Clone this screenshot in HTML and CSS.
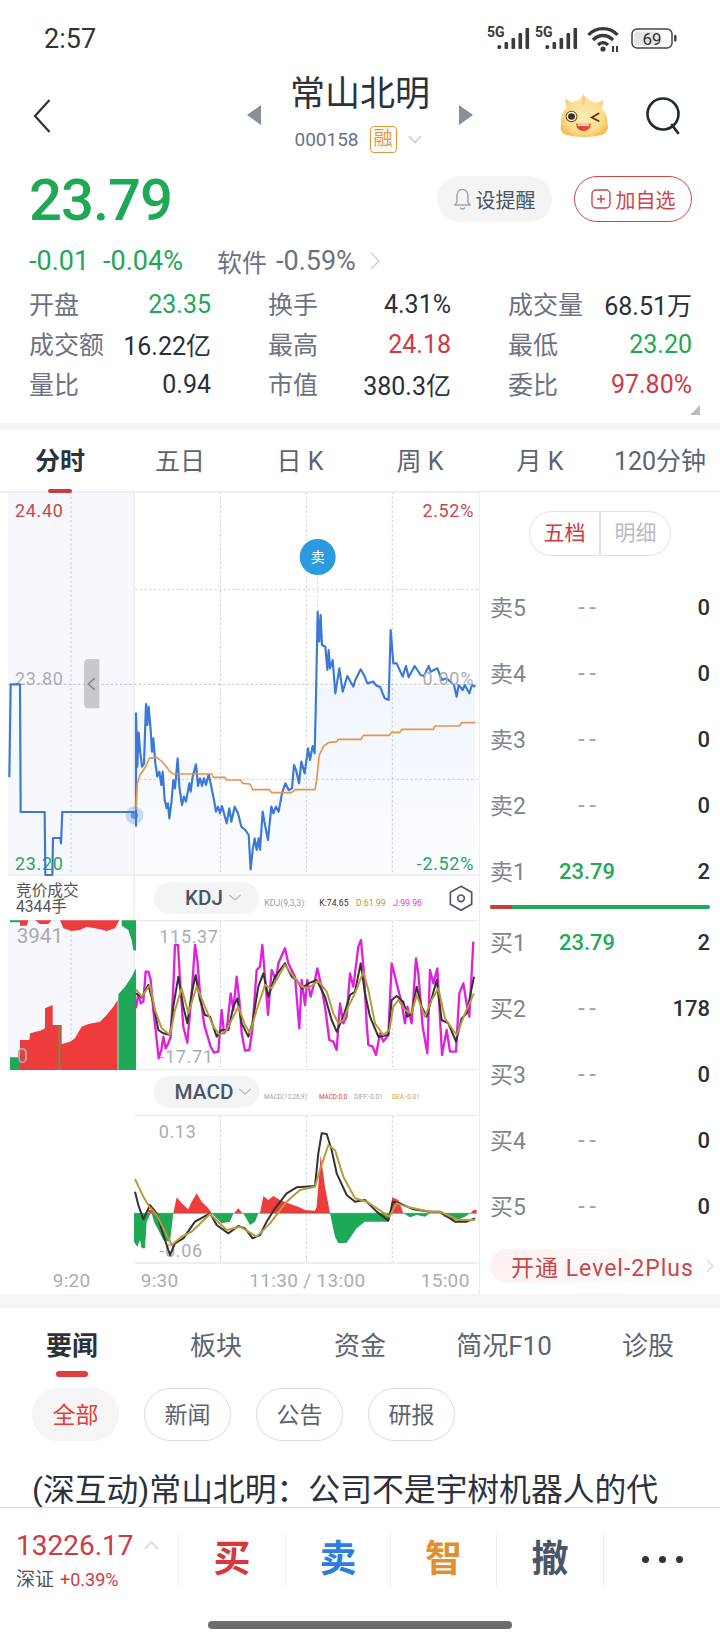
FILE: index.html
```html
<!DOCTYPE html>
<html lang="zh-CN">
<head>
  <meta charset="UTF-8" />
  <meta name="viewport" content="width=device-width, initial-scale=1.0" />
  <title>常山北明</title>
  <link rel="stylesheet" href="styles.css">
</head>
<body>
<div class="page">

  <!-- status bar -->
  <div class="status">
    <span class="clock">2:57</span>
    <svg class="status-icons" width="190" height="32" viewBox="0 -4 190 32">
      <text class="net" x="0" y="11">5G</text>
      <g fill="#3a3a3a">
        <rect x="10.500" y="19" width="3.600" height="4" rx="1.500"/><rect x="17.500" y="16" width="3.600" height="7" rx="1"/><rect x="24.500" y="12" width="3.600" height="11" rx="1"/><rect x="31.500" y="7" width="3.600" height="16" rx="1"/><rect x="38.500" y="2" width="3.600" height="21" rx="1"/>
      </g>
      <text class="net" x="48" y="11">5G</text>
      <g fill="#3a3a3a">
        <rect x="58.500" y="19" width="3.600" height="4" rx="1.500"/><rect x="65.500" y="16" width="3.600" height="7" rx="1"/><rect x="72.500" y="12" width="3.600" height="11" rx="1"/><rect x="79.500" y="7" width="3.600" height="16" rx="1"/><rect x="86.500" y="2" width="3.600" height="21" rx="1"/>
      </g>
      <g fill="none" stroke="#3a3a3a" stroke-width="3.400">
        <path d="M101.500 9C109 0.500 123 0.500 130.500 9"/>
        <path d="M106 14C112 8 120 8 126 14"/>
        <path d="M111 19C114 16 118 16 121 19"/>
      </g>
      <circle cx="116" cy="23" r="2.600" fill="#3a3a3a"/>
      <path d="M126 20v6M130 20v6" stroke="#3a3a3a" stroke-width="2"/>
      <rect x="145" y="3" width="40" height="19" rx="5" fill="#fff" stroke="#444" stroke-width="1.500"/>
      <rect x="147.500" y="5.500" width="25" height="14" rx="3" fill="#e4e4e4"/>
      <rect x="187" y="9" width="2.500" height="6.500" rx="1" fill="#444"/>
      <text class="batt" x="165" y="18.500" text-anchor="middle">69</text>
    </svg>
  </div>

  <!-- stock header -->
  <header class="head">
    <div class="head-left">
      <svg width="18" height="34" viewBox="0 0 18 34"><path d="M16.500 1L2 17l14.500 16" fill="none" stroke="#2b323c" stroke-width="2.200"/></svg>
    </div>
    <div class="head-mid">
      <svg width="14" height="20" viewBox="0 0 14 20"><path d="M14 0v20L0 10z" fill="#8a9097"/></svg>
      <div class="title-box">
        <div class="title">常山北明</div>
        <div class="code-row">
          <span class="code">000158</span>
          <span class="rong">融</span>
          <svg width="14" height="9" viewBox="0 0 14 9"><path d="M1 1l6 6.500L13 1" fill="none" stroke="#c4c7cc" stroke-width="1.300"/></svg>
        </div>
      </div>
      <svg width="14" height="20" viewBox="0 0 14 20"><path d="M0 0v20l14-10z" fill="#8a9097"/></svg>
    </div>
    <div class="head-right">
      <svg width="50" height="44" viewBox="0 0 48 44" preserveAspectRatio="none">
        <defs>
          <radialGradient id="gold" cx="0.5" cy="0.5" r="0.6">
            <stop offset="0" stop-color="#fdeab4"/>
            <stop offset="0.65" stop-color="#fbdd8e"/>
            <stop offset="1" stop-color="#f2b944"/>
          </radialGradient>
        </defs>
        <path d="M23.500 0C25 3 26 5 29 6L36 9 42.500 6.500 41.500 15C45 19 47 24 46.500 30 48 34 46 38 43 40 36 44 12 44 5 40 2 38 1 34 2 30 1.500 24 3 18 7 14L6 5 12.500 8.500 19 6C21 5 22 3 23.500 0z" fill="url(#gold)"/>
        <path d="M23.500 3v8" stroke="#f4cf78" stroke-width="2"/>
        <circle cx="12" cy="22.500" r="5.200" fill="#fff" stroke="#6b4a22" stroke-width="1"/>
        <circle cx="12" cy="22.500" r="3.300" fill="#4a2c12"/>
        <path d="M38 19.500l-6.500 4 6.500 3.500" fill="none" stroke="#5b3413" stroke-width="1.800" stroke-linecap="round"/>
        <path d="M16.500 29.500c4 1 10 1 14 0 0 5-3.500 7.500-7 7.500s-7-2.500-7-7.500z" fill="#e8452f"/>
        <path d="M18 30.500h11v1.500H18z" fill="#fff"/>
      </svg>
      <svg width="38" height="38" viewBox="0 0 38 38"><circle cx="18" cy="17" r="15.500" fill="none" stroke="#1f2a33" stroke-width="2.600"/><path d="M27 28l6 8" stroke="#1f2a33" stroke-width="2.800" stroke-linecap="round"/></svg>
    </div>
  </header>

  <!-- price block -->
  <section class="quote">
    <div class="price-row">
      <span class="price">23.79</span>
      <div class="actions">
        <div class="btn-remind">
          <svg width="17" height="24" viewBox="0 0 17 24"><path d="M8.500 2.500C4.500 2.500 3 6 3 9v6l-2 3h15l-2-3V9c0-3-1.500-6.500-5.500-6.500zM6 20.500c1 2 4 2 5 0" fill="none" stroke="#a0a4aa" stroke-width="1.500"/></svg>
          <span>设提醒</span>
        </div>
        <div class="btn-add">
          <svg width="20" height="22" viewBox="0 0 20 22"><rect x="1" y="2" width="18" height="18" rx="4" fill="none" stroke="#c9474a" stroke-width="1.400"/><path d="M10 7v8M6 11h8" stroke="#c9474a" stroke-width="1.400"/></svg>
          <span>加自选</span>
        </div>
      </div>
    </div>
    <div class="change-row">
      <span class="green">-0.01</span>
      <span class="green pct">-0.04%</span>
      <span class="sector">软件</span>
      <span class="sector-val">-0.59%</span>
      <svg width="10" height="18" viewBox="0 0 10 18"><path d="M1 1l8 8-8 8" fill="none" stroke="#c8cbd0" stroke-width="1.300"/></svg>
    </div>
    <div class="stats">
      <div class="stat"><span>开盘</span><b class="green">23.35</b></div>
      <div class="stat"><span>换手</span><b>4.31%</b></div>
      <div class="stat"><span>成交量</span><b>68.51万</b></div>
      <div class="stat"><span>成交额</span><b>16.22亿</b></div>
      <div class="stat"><span>最高</span><b class="red">24.18</b></div>
      <div class="stat"><span>最低</span><b class="green">23.20</b></div>
      <div class="stat"><span>量比</span><b>0.94</b></div>
      <div class="stat"><span>市值</span><b>380.3亿</b></div>
      <div class="stat"><span>委比</span><b class="red">97.80%</b></div>
    </div>
    <svg class="corner" width="10" height="10" viewBox="0 0 10 10"><path d="M10 0v10H0z" fill="#b9bdc3"/></svg>
  </section>

  <div class="band"></div>

  <nav class="period-tabs">
    <a class="active">分时</a>
    <a>五日</a>
    <a>日 K</a>
    <a>周 K</a>
    <a>月 K</a>
    <a class="tab-wide">120分钟</a>
  </nav>

  <section class="market">
    <!-- chart drawn in 3x units, so one unit is a third of a pixel -->
    <svg class="chart" width="480" height="802" viewBox="0 0 1440 2406">
      <defs>
        <linearGradient id="area" x1="0" y1="0" x2="0" y2="1">
          <stop offset="0" stop-color="#f1f6fe"/>
          <stop offset="1" stop-color="#fbfcff"/>
        </linearGradient>
      </defs>

      <!-- price panel -->
      <g transform="translate(0,-186)">
        <rect x="24" y="186" width="378" height="1149" fill="#f7f8fd"/>
        <path class="area" d="M408 1335V850L440 830 470 1030 510 1165 533 985 590 1003 626 1033 660 1150 736 1200 752 1318 790 1145 810 1140 856 1060 904 995 944 970 948 770H1426V1335z"/>
        <path class="grid" d="M213 186V1335M661 186V1335M919 186V1335M1177 186V1335M405 478H1440M405 1048H1440"/>
        <path class="grid strong" d="M24 763H1440"/>
        <path class="rule" d="M402 186V1345M24 1335H1440M0 186H1440"/>
        <text class="lab lab-red" x="45" y="260">24.40</text>
        <text class="lab lab-red end" x="1422" y="260">2.52%</text>
        <text class="lab lab-green" x="45" y="1320">23.20</text>
        <text class="lab lab-green end" x="1422" y="1320">-2.52%</text>
        <text class="lab lab-grey" x="45" y="765">23.80</text>
        <polyline class="blue" points="28,1042 32,763 60,763 62,1146 134,1146 136,1335 157,1335 159,1224 181,1224 183,1240 187,1146 404,1146"/>
        <polyline class="blue" points="408,1190 408,850 412,1010 416,908 420,960 426,1010 432,1000 438,822 442,885 446,830 452,900 456,965 460,925 466,1000 472,1040 478,1025 484,1065 488,1025 494,1110 500,1135 504,1120 508,1165 514,1120 520,1050 525,1075 533,985 538,1070 546,1125 552,1100 558,1115 568,1060 572,1085 578,1040 588,1003 594,1068 600,1045 606,1068 612,1045 618,1065 626,1033 634,1070 642,1110 648,1145 654,1130 660,1150 666,1128 672,1150 680,1180 688,1135 694,1175 704,1130 714,1150 724,1190 736,1200 746,1215 752,1318 758,1260 764,1225 770,1260 776,1225 780,1260 788,1145 794,1180 804,1230 814,1130 820,1150 828,1130 836,1145 846,1090 856,1060 866,1080 876,1075 882,1005 888,1020 897,1060 904,995 914,1030 924,955 930,990 938,948 944,970 948,800 953,545 958,635 962,555 966,645 976,650 982,720 986,660 990,715 998,690 1006,790 1018,715 1028,785 1042,738 1060,770 1066,750 1082,718 1092,735 1102,760 1120,755 1130,768 1140,770 1154,805 1166,810 1172,600 1180,700 1190,700 1208,740 1218,708 1226,742 1244,708 1262,735 1272,738 1286,708 1292,725 1312,715 1326,750 1340,745 1362,765 1370,800 1376,765 1388,780 1394,765 1408,790 1416,765 1426,770"/>
        <polyline class="avg" points="408,1140 412,1060 420,1035 434,1015 448,985 470,982 490,998 510,1025 520,1032 635,1032 640,1042 675,1042 680,1050 722,1050 728,1060 750,1062 758,1079 808,1079 815,1088 875,1088 885,1079 945,1079 950,1050 958,975 970,950 985,938 1010,935 1015,928 1083,928 1090,916 1168,916 1175,907 1200,907 1205,898 1300,898 1305,888 1378,888 1385,878 1426,878"/>
        <text class="lab lab-grey end" x="1422" y="765">0.00%</text>
        <circle cx="403" cy="1156" r="27" fill="#3b78d8" opacity="0.25"/>
        <circle cx="403" cy="1156" r="11" fill="#3b78d8" opacity="0.7"/>
        <path d="M298 687H266Q252 687 252 701V821Q252 835 266 835H298z" fill="#c9c9cd"/>
        <path d="M284 745L265 762 284 779" fill="none" stroke="#7f8388" stroke-width="4"/>
        <path class="grid" stroke="#6fb3c9" d="M953 440V545"/>
        <circle cx="953" cy="381" r="54" fill="#2d9ae0"/>
        <text class="sell-mark" x="953" y="396">卖</text>
      </g>

      <!-- KDJ and MACD panels, auction volume -->
      <g transform="translate(0,1104)">
        <text class="auction" x="48" y="107">竞价成交</text>
        <text class="auction" x="48" y="155">4344手</text>
        <path class="rule" d="M402 45V180"/>

        <rect x="462" y="67" width="316" height="95" rx="47" fill="#f3f4f6"/>
        <text class="pill-name" x="612" y="136">KDJ</text>
        <path class="pill-chev" d="M688 105l17 15 17-15"/>
        <text class="legend" y="137"><tspan x="793" fill="#9a9ea5">KDJ(9,3,3):</tspan><tspan x="958" fill="#333">K:74.65</tspan><tspan x="1068" fill="#b8943c">D:61.99</tspan><tspan x="1180" fill="#d838d8">J:99.96</tspan></text>
        <path d="M1383 79l32 18v36l-32 18-32-18V97z" fill="none" stroke="#4b5563" stroke-width="5"/>
        <circle cx="1383" cy="115" r="10" fill="none" stroke="#4b5563" stroke-width="5"/>

        <rect x="24" y="182" width="378" height="446" fill="#f7f8fd"/>
        <path class="grid" d="M213 182V628M661 182V628M919 182V628M1177 182V628M661 768V1208M919 768V1208M1177 768V1208"/>
        <path class="rule" d="M402 182H1435M24 182H402M402 182V630M24 629H1435M402 766H1435M402 1209H1435"/>

        <path class="hist-red" d="M60,181 358,181 345,205 320,213 300,208 260,200 240,210 215,213 190,205 180,181 155,181 145,192 120,192 105,181 85,181 80,197 60,197z"/>
        <path class="hist-green" d="M30,181 60,181 60,187 30,187z M365,181 408,181 408,272 400,270 395,240 385,210 365,197z"/>
        <path class="hist-green" d="M30,630 30,592 60,592 60,630z M355,630 355,403 375,380 395,350 408,325 408,630z"/>
        <path class="hist-red" d="M60,540 88,540 90,520 120,512 135,505 135,445 158,435 158,495 185,495 185,552 210,545 225,535 245,500 265,492 300,485 320,465 340,440 353,420 353,630 60,630z"/>
        <path d="M178 497V630" stroke="#7a8a40" stroke-width="6"/>
        <text class="lab-vol" x="50" y="250">3941</text>
        <text class="lab-vol" x="50" y="610">0</text>

        <text class="lab lab-grey" x="478" y="250">115.37</text>
        <text class="lab lab-grey" x="478" y="610">-17.71</text>
        <polyline class="j-line" points="408,445 415,400 422,430 430,425 437,335 445,335 452,360 460,450 468,520 476,595 484,570 490,530 497,565 505,550 512,530 520,380 525,255 534,255 540,360 550,500 562,548 575,400 585,255 592,300 600,400 612,490 620,520 632,560 642,578 655,575 665,450 672,520 680,510 692,400 700,450 710,350 718,420 725,520 735,572 748,570 757,510 770,330 780,320 787,255 795,350 804,465 815,330 828,360 835,310 855,265 865,310 885,350 898,505 905,360 915,435 922,360 932,410 945,360 952,325 962,370 975,440 988,540 1000,545 1010,570 1020,430 1030,490 1040,470 1050,340 1060,380 1075,260 1083,240 1092,340 1100,490 1105,555 1118,560 1128,585 1140,520 1150,545 1165,525 1175,310 1190,370 1205,430 1215,490 1222,440 1235,490 1248,295 1255,340 1268,500 1282,580 1290,330 1300,370 1312,325 1326,585 1340,510 1350,575 1368,575 1378,400 1390,370 1398,420 1408,470 1420,245"/>
        <polyline class="k-line" points="408,400 425,412 445,375 460,430 475,510 490,520 510,525 520,440 535,350 550,440 562,490 575,400 587,345 600,420 615,465 630,470 650,530 665,510 685,510 700,440 712,415 725,490 745,530 757,490 775,380 790,340 805,410 825,350 855,310 875,350 890,360 905,385 925,370 950,360 975,410 995,480 1010,515 1030,470 1050,405 1065,395 1082,310 1095,400 1110,470 1135,530 1165,525 1175,420 1190,408 1210,425 1222,470 1235,460 1250,380 1265,440 1280,470 1310,360 1325,480 1345,490 1368,545 1385,475 1400,460 1422,350"/>
        <polyline class="d-line" points="408,388 425,410 450,375 465,450 485,505 510,525 525,450 545,385 565,460 590,380 615,440 640,500 660,525 680,510 700,470 715,440 735,495 750,520 770,450 795,375 815,385 855,315 885,355 905,380 925,385 955,362 980,395 1000,460 1015,490 1030,480 1045,440 1065,400 1090,335 1105,390 1125,490 1150,525 1168,510 1180,440 1195,420 1215,450 1235,460 1250,405 1275,470 1295,420 1315,385 1335,475 1370,525 1395,460 1422,400"/>

        <rect x="462" y="648" width="316" height="95" rx="47" fill="#f3f4f6"/>
        <text class="pill-name" x="612" y="717">MACD</text>
        <path class="pill-chev" d="M718 687l17 15 17-15"/>
        <text class="legend small" y="718"><tspan x="792" fill="#9a9ea5">MACD(12,26,9):</tspan><tspan x="957" fill="#d8383a">MACD:0.0</tspan><tspan x="1062" fill="#9a9ea5">DIFF:-0.01</tspan><tspan x="1176" fill="#c7a33f">DEA:-0.01</tspan></text>

        <text class="lab lab-grey" x="476" y="833">0.13</text>
        <path class="hist-red" d="M445 1060V1050H465V1060z M520,1060 530,1012 545,1030 565,1048 575,1025 590,1000 605,1025 625,1045 635,1060z M703,1060 715,1045 727,1060z M780,1060 790,1008 805,1020 820,1008 840,1020 870,1032 895,1040 915,1050 945,1052 950,1040 962,885 975,980 990,1060z M1170,1060 1177,1012 1195,1020 1210,1060z M1412,1060 1420,1050 1430,1050 1430,1060z"/>
        <path class="hist-green" d="M402,1060 402,1145 412,1160 420,1140 425,1165 435,1165 440,1085 452,1060z M455,1060 462,1085 475,1110 490,1140 510,1145 520,1060z M635,1060 665,1090 690,1085 700,1060z M730,1060 750,1095 765,1085 775,1060z M990,1060 1005,1130 1015,1150 1040,1148 1070,1105 1095,1085 1165,1085 1170,1060z M1210,1060 1230,1072 1250,1065 1275,1070 1290,1060z M1320,1060 1335,1072 1370,1080 1395,1070 1410,1060z"/>
        <path d="M402 1060H1430" stroke="#1fa855" stroke-width="2"/>
        <text class="lab lab-grey" x="478" y="1192">-0.06</text>
        <polyline class="k-line" points="405,995 415,1035 430,1078 450,1035 470,1060 490,1125 510,1185 525,1150 550,1135 585,1085 630,1060 650,1095 685,1120 715,1098 735,1105 758,1135 780,1125 800,1085 825,1045 860,1000 890,982 945,978 955,880 965,820 980,822 995,870 1010,940 1040,1005 1065,1025 1095,1020 1130,1055 1165,1082 1178,1025 1200,1030 1240,1048 1290,1055 1320,1055 1365,1085 1400,1085 1425,1075"/>
        <polyline class="d-line" points="405,957 430,1010 448,1040 470,1065 515,1155 545,1130 575,1115 630,1062 680,1110 720,1100 770,1130 810,1090 860,1025 900,990 945,980 960,930 985,855 1005,870 1030,950 1065,1015 1100,1025 1168,1070 1190,1030 1220,1040 1290,1055 1320,1055 1375,1080 1425,1080"/>

        <text class="axis" x="158" y="1280">9:20</text>
        <text class="axis" x="422" y="1280">9:30</text>
        <text class="axis" x="748" y="1280">11:30 / 13:00</text>
        <text class="axis" x="1262" y="1280">15:00</text>
      </g>
    </svg>

    <aside class="book">
      <div class="book-switch">
        <span class="on">五档</span>
        <span>明细</span>
      </div>
      <div class="book-rows">
        <div class="row"><span>卖5</span><em>--</em><b>0</b></div>
        <div class="row"><span>卖4</span><em>--</em><b>0</b></div>
        <div class="row"><span>卖3</span><em>--</em><b>0</b></div>
        <div class="row"><span>卖2</span><em>--</em><b>0</b></div>
        <div class="row"><span>卖1</span><em class="green">23.79</em><b>2</b></div>
      </div>
      <div class="ratio"><i></i></div>
      <div class="book-rows">
        <div class="row"><span>买1</span><em class="green">23.79</em><b>2</b></div>
        <div class="row"><span>买2</span><em>--</em><b>178</b></div>
        <div class="row"><span>买3</span><em>--</em><b>0</b></div>
        <div class="row"><span>买4</span><em>--</em><b>0</b></div>
        <div class="row"><span>买5</span><em>--</em><b>0</b></div>
      </div>
      <div class="level2">
        <span>开通 Level-2Plus</span>
        <svg width="8" height="14" viewBox="0 0 8 14"><path d="M1 1l6 6-6 6" fill="none" stroke="#d5d7db" stroke-width="1.200"/></svg>
      </div>
    </aside>
  </section>

  <div class="band band-news"></div>

  <nav class="news-tabs">
    <a class="active">要闻</a>
    <a>板块</a>
    <a>资金</a>
    <a>简况F10</a>
    <a>诊股</a>
  </nav>

  <div class="chips">
    <span class="chip on">全部</span>
    <span class="chip">新闻</span>
    <span class="chip">公告</span>
    <span class="chip">研报</span>
  </div>

  <p class="headline">(深互动)常山北明：公司不是宇树机器人的代</p>

  <!-- bottom bar sits over the news list -->
  <footer class="bar">
    <div class="index">
      <div class="index-top">
        <span class="index-val">13226.17</span>
        <svg width="15" height="9" viewBox="0 0 15 9"><path d="M1 8l6.500-7L14 8" fill="none" stroke="#cfd2d6" stroke-width="1.300"/></svg>
      </div>
      <div class="index-sub"><span>深证</span><b>+0.39%</b></div>
    </div>
    <a class="act buy">买</a>
    <a class="act sell">卖</a>
    <a class="act smart">智</a>
    <a class="act undo">撤</a>
    <a class="act more"><i></i><i></i><i></i></a>
    <div class="home-pill"></div>
  </footer>
</div>
</body>
</html>
```

FILE: styles.css
```css
* {
  box-sizing: border-box;
}

body {
  margin: 0;
  background: #fff;
  font-family: Roboto, "Noto Sans CJK SC", sans-serif;
  color: #2a2f38;
}

.page {
  position: relative;
  width: 720px;
  height: 1640px;
  overflow: hidden;
  background: #fff;
}

.green { color: #1fa855; }
.red { color: #d0393f; }

/* status bar */
.status {
  height: 70px;
  display: flex;
  align-items: center;
  justify-content: space-between;
  padding: 8px 43px 0 44px;
}

.status-icons {
  margin-top: -2px;
}

.clock {
  font-size: 27px;
  color: #333;
}

.net {
  font: 700 14px Roboto, sans-serif;
  fill: #3a3a3a;
}

.batt {
  font: 17px Roboto, sans-serif;
  fill: #333;
}

/* header */
.head {
  height: 90px;
  display: grid;
  grid-template-columns: 247px 226px 247px;
}

.head-left {
  display: flex;
  align-items: center;
  padding: 0 0 4px 33px;
}

.head-mid {
  display: flex;
  align-items: center;
  justify-content: space-between;
  padding-bottom: 6px;
}

.title-box {
  align-self: flex-start;
  padding-top: 2px;
  text-align: center;
}

.title {
  height: 46px;
  line-height: 46px;
  font-size: 35px;
  color: #2b323c;
}

.code-row {
  height: 42px;
  display: flex;
  align-items: center;
  justify-content: center;
  gap: 11px;
  padding-right: 4px;
}

.code {
  font-size: 19px;
  color: #6c7280;
}

.rong {
  width: 27px;
  height: 27px;
  line-height: 24px;
  text-align: center;
  font-size: 19px;
  color: #e8943a;
  border: 1px solid #e8943a;
  border-radius: 4px;
}

.head-right {
  display: flex;
  align-items: center;
  justify-content: flex-end;
  gap: 36px;
  padding: 0 37px 4px 0;
}

/* quote */
.quote {
  position: relative;
  height: 263px;
}

.price-row {
  height: 80px;
  display: flex;
  align-items: center;
  justify-content: space-between;
  padding: 0 28px 0 29px;
}

.price {
  font-size: 58px;
  font-weight: 500;
  letter-spacing: -1px;
  color: #1fa855;
}

.actions {
  display: flex;
  gap: 22px;
  margin-top: -2px;
}

.btn-remind,
.btn-add {
  height: 46px;
  display: flex;
  align-items: center;
  justify-content: center;
  gap: 5px;
  font-size: 20px;
  border-radius: 23px;
}

.btn-remind {
  width: 115px;
  background: #f4f4f5;
  color: #4b5563;
}

.btn-add {
  width: 118px;
  color: #c9474a;
  border: 1px solid #c9474a;
}

.change-row {
  height: 42px;
  display: flex;
  align-items: center;
  padding-left: 29px;
  margin-bottom: 2px;
  font-size: 27px;
  color: #6c7280;
}

.pct {
  margin-left: 14px;
}

.sector {
  margin-left: 34px;
  font-size: 25px;
}

.sector-val {
  margin-left: 9px;
  margin-right: 14px;
}

.stats {
  display: grid;
  grid-template-columns: 182px 183px 184px;
  column-gap: 57px;
  padding-left: 29px;
}

.stat {
  height: 40px;
  display: flex;
  align-items: center;
  justify-content: space-between;
  font-size: 25px;
  color: #6c7280;
  white-space: nowrap;
}

.stat span {
  margin-top: -3px;
}

.stat b {
  font-size: 25px;
  font-weight: 400;
  color: #2a2f38;
}

.stat b.green { color: #1fa855; }
.stat b.red { color: #d0393f; }

.corner {
  position: absolute;
  left: 690px;
  top: 245px;
}

.band {
  height: 7px;
  background: #f5f5f5;
}

.band-news {
  height: 14px;
}

/* period tabs */
.period-tabs {
  height: 62px;
  display: grid;
  grid-template-columns: repeat(6, 120px);
  border-bottom: 1px solid #eceef1;
}

.period-tabs a,
.news-tabs a {
  position: relative;
  text-align: center;
  color: #5c6470;
  white-space: nowrap;
}

.period-tabs a {
  font-size: 25px;
  line-height: 64px;
}

.period-tabs a.active,
.news-tabs a.active {
  font-weight: 700;
  color: #2a323c;
}

.period-tabs a.active::after {
  content: "";
  position: absolute;
  left: 48px;
  bottom: 1px;
  width: 24px;
  height: 4px;
  border-radius: 2px;
  background: #d0393f;
}

/* chart */
.market {
  height: 802px;
  display: flex;
}

.chart {
  flex: none;
  display: block;
  width: 480px;
}

.grid {
  fill: none;
  stroke: #bcc6ce;
  stroke-width: 2.500;
  stroke-dasharray: 7 7;
}

.grid.strong {
  stroke: #aab3bb;
}

.rule {
  fill: none;
  stroke: #e8eaee;
  stroke-width: 4;
}

.area {
  fill: url(#area);
}

.lab {
  font-family: Roboto, sans-serif;
  font-size: 54px;
  letter-spacing: 2px;
}

.lab.end {
  text-anchor: end;
}

.lab-red { fill: #c9474a; }
.lab-green { fill: #2aa55c; }
.lab-grey { fill: #a9adb3; }

.lab-vol {
  font-family: Roboto, sans-serif;
  font-size: 62px;
  fill: #a8a8ad;
}

.blue,
.avg,
.k-line,
.d-line,
.j-line {
  fill: none;
  stroke-linejoin: round;
}

.blue {
  stroke: #3b78d8;
  stroke-width: 6.500;
}

.avg {
  stroke: #e8944a;
  stroke-width: 5;
}

.sell-mark {
  font-size: 42px;
  fill: #fff;
  text-anchor: middle;
}

.auction {
  font-size: 47px;
  fill: #555;
}

.pill-name {
  font-family: Roboto, sans-serif;
  font-size: 62px;
  font-weight: 500;
  fill: #4b5563;
  text-anchor: middle;
}

.pill-chev {
  fill: none;
  stroke: #b5b9bf;
  stroke-width: 3.500;
}

.legend {
  font-family: Roboto, sans-serif;
  font-size: 26px;
}

.legend.small {
  font-size: 19px;
}

.hist-red { fill: #ee3b3b; }
.hist-green { fill: #1fa855; }

.j-line {
  stroke: #e020e0;
  stroke-width: 7;
}

.k-line {
  stroke: #333;
  stroke-width: 6;
}

.d-line {
  stroke: #b99a3d;
  stroke-width: 6;
}

.axis {
  font-family: Roboto, sans-serif;
  font-size: 57px;
  letter-spacing: 1px;
  fill: #a9aeb5;
}

/* order book */
.book {
  flex: 1;
  padding: 19px 10px 0 10px;
  margin-left: -1px;
  border-left: 1px solid #eceef1;
}

.book-switch {
  width: 142px;
  height: 45px;
  margin: 0 0 19px 39px;
  display: flex;
  border: 1px solid #dfe1e4;
  border-radius: 23px;
  font-size: 21px;
  line-height: 43px;
  text-align: center;
  color: #b9bcc1;
}

.book-switch span {
  flex: 1;
}

.book-switch .on {
  color: #d0393f;
  border-right: 2px solid #dfe1e4;
}

.row {
  height: 66px;
  padding-bottom: 5px;
  display: grid;
  grid-template-columns: 50px 94px 76px;
  align-items: center;
  font-size: 23px;
  color: #80858d;
}

.row em {
  margin-top: 4px;
  padding-left: 5px;
  font-style: normal;
  text-align: center;
  letter-spacing: 5px;
  color: #9a9ea5;
}

.row em.green {
  padding-left: 0;
  color: #1fa855;
  font-weight: 500;
  font-size: 22px;
  letter-spacing: 0;
}

.row b {
  margin-top: 4px;
  font-size: 22px;
  font-weight: 500;
  text-align: right;
  color: #2a2f38;
}

.ratio {
  height: 4px;
  margin-bottom: 1px;
  border-radius: 2px;
  background: #1fa855;
  overflow: hidden;
}

.ratio i {
  display: block;
  width: 22px;
  height: 4px;
  background: #d0393f;
}

.level2 {
  height: 34px;
  margin: 9px -10px 0 0;
  display: flex;
  align-items: center;
  gap: 12px;
  padding-left: 21px;
  border-radius: 17px 0 0 17px;
  font-size: 23px;
  letter-spacing: 1px;
  white-space: nowrap;
  color: #c9474a;
  background: linear-gradient(90deg, #fdf0f0, #fff 92%);
}

/* news */
.news-tabs {
  height: 80px;
  display: grid;
  grid-template-columns: repeat(5, 144px);
}

.news-tabs a {
  font-size: 26px;
  line-height: 76px;
}

.news-tabs a.active::after {
  content: "";
  position: absolute;
  left: 56px;
  top: 63px;
  width: 32px;
  height: 6px;
  border-radius: 3px;
  background: #e03c3c;
}

.chips {
  display: flex;
  gap: 25px;
  padding-left: 32px;
}

.chip {
  width: 87px;
  height: 53px;
  line-height: 53px;
  text-align: center;
  font-size: 23px;
  color: #5c6470;
  border: 1px solid #dcdde0;
  border-radius: 26px;
}

.chip.on {
  color: #e03c3c;
  background: #f5f5f5;
  border-color: #f5f5f5;
}

.headline {
  margin: 29px 0 0 32px;
  font-size: 31.800px;
  line-height: 40px;
  white-space: nowrap;
  color: #2b323c;
}

/* bottom bar */
.bar {
  position: absolute;
  left: 0;
  bottom: 0;
  width: 720px;
  height: 133px;
  display: flex;
  align-items: flex-start;
  padding-top: 25px;
  background: #fff;
  border-top: 1px solid #dfe0e2;
}

.index {
  width: 178px;
  padding-left: 16px;
  height: 53px;
  margin-top: -1px;
}

.index-top {
  display: flex;
  align-items: center;
  gap: 10px;
  height: 26px;
}

.index-val {
  font-size: 28px;
  color: #d0393f;
}

.index-sub {
  display: flex;
  align-items: baseline;
  gap: 6px;
  margin-top: 6px;
  font-size: 19px;
  color: #4b5563;
}

.index-sub b {
  font-size: 18px;
  font-weight: 400;
  color: #d0393f;
}

.act {
  width: 106px;
  height: 53px;
  line-height: 53px;
  text-align: center;
  font-size: 37px;
  font-weight: 700;
  border-left: 1px solid #eeeff1;
}

.buy { width: 107px; color: #d8383a; }
.sell { width: 105px; color: #2e7de0; }
.smart { width: 106px; color: #e0902f; }
.undo { width: 107px; color: #4a5568; }

.more {
  width: 117px;
  display: flex;
  align-items: center;
  justify-content: center;
  gap: 10px;
}

.more i {
  width: 7px;
  height: 7px;
  border-radius: 50%;
  background: #333;
}

.home-pill {
  position: absolute;
  left: 208px;
  top: 113px;
  width: 304px;
  height: 8px;
  border-radius: 4px;
  background: #6c6c6c;
}
```
